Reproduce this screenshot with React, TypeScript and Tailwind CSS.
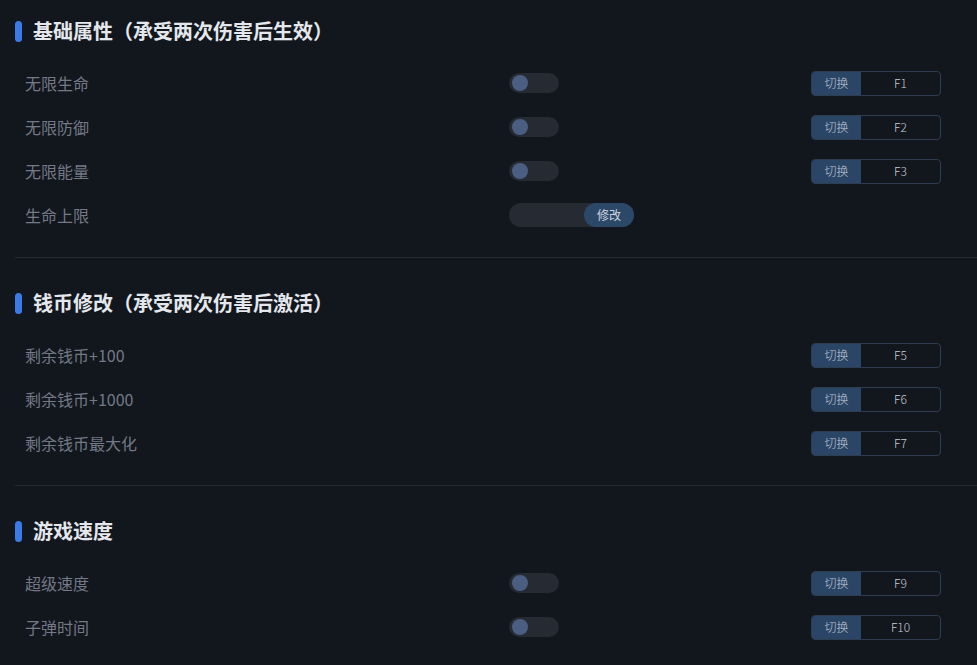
import React from "react";

type Row = {
  label: string;
  control?: "toggle" | "slider";
  hotkey?: string;
};

type Section = {
  title: string;
  rows: Row[];
};

const SECTIONS: Section[] = [
  {
    title: "基础属性（承受两次伤害后生效）",
    rows: [
      { label: "无限生命", control: "toggle", hotkey: "F1" },
      { label: "无限防御", control: "toggle", hotkey: "F2" },
      { label: "无限能量", control: "toggle", hotkey: "F3" },
      { label: "生命上限", control: "slider" },
    ],
  },
  {
    title: "钱币修改（承受两次伤害后激活）",
    rows: [
      { label: "剩余钱币+100", hotkey: "F5" },
      { label: "剩余钱币+1000", hotkey: "F6" },
      { label: "剩余钱币最大化", hotkey: "F7" },
    ],
  },
  {
    title: "游戏速度",
    rows: [
      { label: "超级速度", control: "toggle", hotkey: "F9" },
      { label: "子弹时间", control: "toggle", hotkey: "F10" },
    ],
  },
];

function Toggle() {
  return (
    <div className="w-[50px] h-[20px] rounded-full bg-[#262a33] flex items-center px-[3px]">
      <div className="w-[16px] h-[16px] rounded-full bg-[#4a5e82]" />
    </div>
  );
}

function Slider() {
  return (
    <div className="w-[125px] h-[24px] rounded-full bg-[#262a33] flex justify-end">
      <button className="w-[50px] h-[24px] rounded-full bg-[#2c4869] text-[12px] text-[#cdd4de]">
        修改
      </button>
    </div>
  );
}

function Hotkey({ k }: { k: string }) {
  return (
    <div className="w-[130px] h-[25px] rounded-[4px] border border-[#2e3d52] flex overflow-hidden text-[12px] font-light">
      <div className="w-[49px] bg-[#2a4566] text-[#c3cad4] flex items-center justify-center">切换</div>
      <div className="flex-1 flex items-center justify-center text-[#c8ccd4]">{k}</div>
    </div>
  );
}

export default function App() {
  return (
    <div
      className="w-[977px] h-[665px] overflow-hidden bg-[#12161d] pl-[15px]"
      style={{ fontFamily: '"Noto Sans CJK SC", "Noto Sans", sans-serif' }}
    >
      {SECTIONS.map((s, i) => (
        <section
          key={s.title}
          className={`${i === 0 ? "pt-[18px]" : "pt-[32px]"} pb-[20px] ${i < SECTIONS.length - 1 ? "border-b border-[#232831]" : ""}`}
        >
          <div className="h-[26px] flex items-center gap-[11px] mb-[17px]">
            <span className="w-[7px] h-[21px] rounded-full bg-[#3b7be8]" />
            <h2 className="text-[20px] font-bold text-[#e4e7ec] leading-none">{s.title}</h2>
          </div>
          {s.rows.map((r) => (
            <div key={r.label} className="h-[44px] flex items-center pl-[10px]">
              <div className="w-[484px] text-[16px] leading-[20px] text-[#737986] -mt-[1px]">{r.label}</div>
              <div className="w-[302px] flex items-center">
                {r.control === "toggle" && <Toggle />}
                {r.control === "slider" && <Slider />}
              </div>
              {r.hotkey && <Hotkey k={r.hotkey} />}
            </div>
          ))}
        </section>
      ))}
    </div>
  );
}
